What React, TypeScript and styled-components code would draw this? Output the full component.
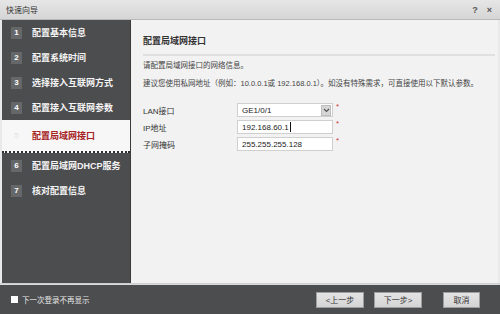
import styled, { createGlobalStyle } from 'styled-components';

const Global = createGlobalStyle`
  html, body { margin: 0; padding: 0; background: #4c4d4f; }
  body { font-family: "Liberation Sans", "Noto Sans CJK SC", sans-serif; }
  * { box-sizing: border-box; }
`;

const Win = styled.div`
  width: 500px;
  height: 314px;
  display: flex;
  flex-direction: column;
  background: #4c4d4f;
  overflow: hidden;
`;

const TitleBar = styled.div`
  height: 20px;
  flex: none;
  display: flex;
  align-items: center;
  justify-content: space-between;
  padding: 0 8px 0 6px;
  background: linear-gradient(#e6e6e6, #d5d5d5);
  border-bottom: 1px solid #b9b9b9;
  color: #333;
  font-size: 8px;
`;

const Tools = styled.div`
  display: flex;
  gap: 9px;
  font-weight: bold;
  font-size: 9px;
  color: #555;
`;

const Body = styled.div`
  height: 264px;
  flex: none;
  display: flex;
  padding: 0 2px;
  background: #e9e9e9;
  border-bottom: 1px solid #cfcfcf;
`;

const Side = styled.ul`
  width: 129px;
  flex: none;
  margin: 0;
  padding: 0;
  list-style: none;
  background: #4c4d4f;
  border-right: 1px solid #3a3a3a;
`;

const Step = styled.li<{ $on?: boolean }>`
  height: ${({ $on }) => ($on ? 33 : 25)}px;
  display: flex;
  align-items: center;
  gap: 10px;
  padding-left: 9px;
  font-size: 9px;
  font-weight: bold;
  color: ${({ $on }) => ($on ? '#a52222' : '#f4f4f4')};
  background: ${({ $on }) => ($on ? '#f7f7f7' : 'transparent')};
  border-bottom: ${({ $on }) => ($on ? '2px dotted #2e2e2e' : 'none')};
`;

const Num = styled.span<{ $on?: boolean }>`
  width: 11px;
  height: 12px;
  display: flex;
  align-items: center;
  justify-content: center;
  font-size: 8px;
  font-weight: ${({ $on }) => ($on ? 'normal' : 'bold')};
  color: ${({ $on }) => ($on ? '#e2e2e2' : '#fff')};
  background: ${({ $on }) => ($on ? 'none' : '#666769')};
`;

const Main = styled.div`
  flex: 1;
  background: #f2f2f2;
  padding: 14px 3px 0 12px;
  color: #333;
`;

const Heading = styled.div`
  font-size: 9px;
  font-weight: bold;
  padding-bottom: 7px;
  border-bottom: 2px solid #e0e0e0;
`;

const Note = styled.p<{ $gap: number }>`
  margin: ${({ $gap }) => $gap}px 0 0;
  font-size: 7.5px;
  color: #444;
  white-space: nowrap;
`;

const Form = styled.div`
  margin-top: 15px;
  display: grid;
  grid-template-columns: 94px auto;
  row-gap: 3px;
  align-items: center;
`;

const Label = styled.span`
  font-size: 8px;
  color: #333;
`;

const Field = styled.div`
  display: flex;
  align-items: flex-start;
  gap: 3px;
`;

const Box = styled.div<{ $start?: boolean }>`
  width: 96px;
  height: 14px;
  display: flex;
  align-items: center;
  justify-content: ${({ $start }) => ($start ? 'flex-start' : 'space-between')};
  padding: 0 1px 0 4px;
  background: #fff;
  border: 1px solid #cfcfcf;
  font-size: 8px;
  color: #222;
`;

const Caret = styled.span`
  width: 1px;
  height: 10px;
  background: #111;
  margin-left: 1px;
`;

const Arrow = styled.span`
  width: 10px;
  height: 11px;
  display: flex;
  align-items: center;
  justify-content: center;
  background: #d6d6d6;
  border: 1px solid #bdbdbd;
`;

const Star = styled.span`
  color: #d23a3a;
  font-size: 8px;
  line-height: 8px;
`;

const Foot = styled.div`
  flex: 1;
  display: flex;
  align-items: center;
  padding: 0 20px 0 11px;
  background: #4c4d4f;
  border-top: 1px solid #dadada;
`;

const Check = styled.label`
  display: flex;
  align-items: center;
  gap: 4px;
  font-size: 7.5px;
  color: #e8e8e8;
  margin-right: auto;
  span {
    width: 7px;
    height: 7px;
    background: #fff;
  }
`;

const Btn = styled.button<{ $w: number; $ml: number }>`
  width: ${({ $w }) => $w}px;
  height: 16px;
  margin-left: ${({ $ml }) => $ml}px;
  padding: 0;
  font-family: inherit;
  font-size: 8px;
  color: #333;
  background: linear-gradient(#e4e4e4, #d4d4d4);
  border: 1px solid #9e9e9e;
`;

const steps = [
  '配置基本信息',
  '配置系统时间',
  '选择接入互联网方式',
  '配置接入互联网参数',
  '配置局域网接口',
  '配置局域网DHCP服务',
  '核对配置信息',
];

export default function App() {
  return (
    <Win>
      <Global />
      <TitleBar>
        <span>快速向导</span>
        <Tools>
          <span>?</span>
          <span>×</span>
        </Tools>
      </TitleBar>
      <Body>
        <Side>
          {steps.map((s, i) => (
            <Step key={s} $on={i === 4}>
              <Num $on={i === 4}>{i + 1}</Num>
              {s}
            </Step>
          ))}
        </Side>
        <Main>
          <Heading>配置局域网接口</Heading>
          <Note $gap={3}>请配置局域网接口的网络信息。</Note>
          <Note $gap={7}>建议您使用私网地址（例如：10.0.0.1或 192.168.0.1）。如没有特殊需求，可直接使用以下默认参数。</Note>
          <Form>
            <Label>LAN接口</Label>
            <Field>
              <Box>
                GE1/0/1
                <Arrow>
                  <svg width="7" height="5" viewBox="0 0 7 5">
                    <path d="M1 1l2.5 2.5L6 1" fill="none" stroke="#555" strokeWidth="1.2" />
                  </svg>
                </Arrow>
              </Box>
              <Star>*</Star>
            </Field>
            <Label>IP地址</Label>
            <Field>
              <Box $start>
                192.168.60.1<Caret />
              </Box>
              <Star>*</Star>
            </Field>
            <Label>子网掩码</Label>
            <Field>
              <Box>255.255.255.128</Box>
              <Star>*</Star>
            </Field>
          </Form>
        </Main>
      </Body>
      <Foot>
        <Check>
          <span />
          下一次登录不再显示
        </Check>
        <Btn $w={48} $ml={0}>&lt;上一步</Btn>
        <Btn $w={48} $ml={10}>下一步&gt;</Btn>
        <Btn $w={37} $ml={21}>取消</Btn>
      </Foot>
    </Win>
  );
}
